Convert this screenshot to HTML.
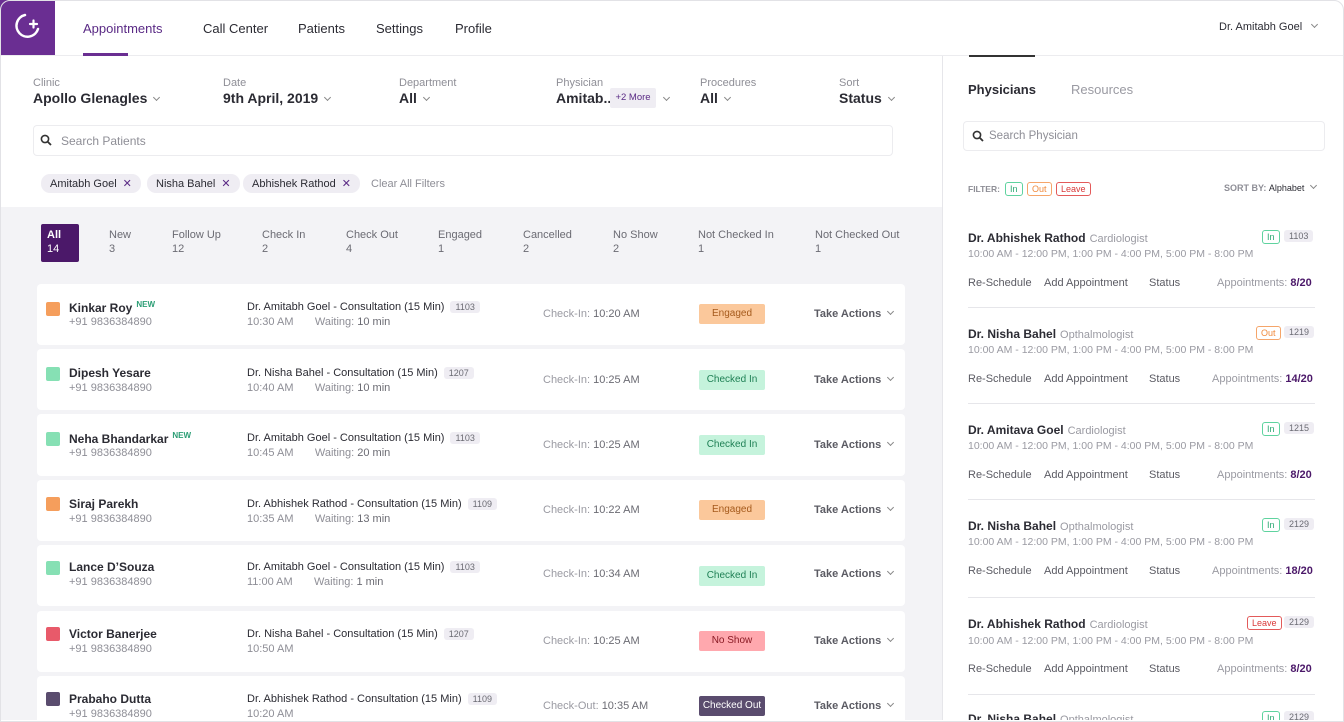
<!DOCTYPE html>
<html><head><meta charset="utf-8"><style>
*{box-sizing:border-box;margin:0;padding:0}
body{width:1344px;height:720px;overflow:hidden;background:#fff;font-family:"Liberation Sans",sans-serif;color:#2b2b33;position:relative}
.frame{position:absolute;left:0;top:0;width:1344px;height:720px;background:#fff;overflow:hidden}
.bord{position:absolute;left:0;top:0;width:1344px;height:722px;border:1px solid #e2e2e6;border-radius:10px 10px 0 0;z-index:9}
.a{position:absolute;white-space:nowrap}
.nav{font-size:13px;top:21px;color:#2b2b33}
.lbl{font-size:11px;color:#8e8e96}
.val{font-size:14px;font-weight:bold;color:#2b2b33}
.chev{display:inline-block;width:5px;height:5px;border-right:1px solid #888;border-bottom:1px solid #888;transform:rotate(45deg);margin-left:7px;position:relative;top:-3px}
.chip{position:absolute;top:174px;height:19px;background:#efedf3;border-radius:9px;font-size:11px;padding:3px 9px;color:#2b2b33}
.chip b{color:#5a2a85;font-weight:normal;margin-left:6px}
.tab{position:absolute;top:228px;font-size:11px;color:#6b6b73;line-height:14px}
.card{position:absolute;left:37px;width:868px;background:#fff;border-radius:4px}
.sq{position:absolute;left:9px;width:14px;height:14px;border-radius:2px}
.nm{position:absolute;left:32px;font-size:12px;font-weight:bold}
.nm i{font-style:normal;color:#2a9d74;font-size:8px;margin-left:4px;vertical-align:5px}
.ph{position:absolute;left:32px;font-size:11px;color:#8e8e96}
.dr{position:absolute;left:210px;font-size:11px;color:#2b2b33}
.dr s{text-decoration:none;background:#efedf3;color:#6b6b73;font-size:9px;padding:1px 5px;border-radius:3px;margin-left:6px}
.tm{position:absolute;left:210px;font-size:11px;color:#8e8e96}
.tm b{font-weight:normal;color:#6b6b73}
.ci{position:absolute;left:506px;font-size:11px;color:#9a9aa2}
.ci b{color:#6b6b73;font-weight:normal}
.bd{position:absolute;left:662px;width:66px;height:20px;font-size:10px;text-align:center;line-height:20px;border-radius:2px}
.ta{position:absolute;left:777px;font-size:11px;color:#5b5b63;font-weight:bold}
.pn{position:absolute;left:968px;font-size:12px;font-weight:bold}
.pn i{font-style:normal;font-weight:normal;color:#9a9aa2;font-size:11px;margin-left:4px}
.ph2{position:absolute;left:968px;font-size:10.5px;color:#9a9aa2}
.act{position:absolute;font-size:11px;color:#5b5b63}
.tag{position:absolute;font-size:9px;border:1px solid;border-radius:3px;padding:0 4px;line-height:12px}
.num{position:absolute;left:1284px;font-size:9px;background:#efedf3;color:#6b6b73;padding:1px 5px;border-radius:3px}
.sep{position:absolute;left:968px;width:347px;height:1px;background:#e6e6ea}
</style></head><body><div class="bord"></div><div class="frame">
<div class="a" style="left:0;top:0;width:55px;height:55px;background:#6a2e92"></div>
<svg class="a" style="left:12px;top:10px" width="32" height="32" viewBox="0 0 32 32"><path d="M13 5 A11 11 0 1 0 26 19" fill="none" stroke="#fff" stroke-width="2.5" stroke-linecap="round"/><path d="M18 14h7M21.5 10.5v7" stroke="#fff" stroke-width="2.2" stroke-linecap="round"/></svg>
<div class="a" style="left:0;top:55px;width:1344px;height:1px;background:#ececef"></div>
<div class="a nav" style="left:83px;color:#5a2a85">Appointments</div>
<div class="a" style="left:83px;top:53px;width:45px;height:3px;background:#6a2e92"></div>
<div class="a nav" style="left:203px">Call Center</div>
<div class="a nav" style="left:298px">Patients</div>
<div class="a nav" style="left:376px">Settings</div>
<div class="a nav" style="left:455px">Profile</div>
<div class="a" style="left:1219px;top:21px;font-size:11px">Dr. Amitabh Goel <span class="chev"></span></div>

<div class="a lbl" style="left:33px;top:77px">Clinic</div><div class="a val" style="left:33px;top:90px">Apollo Glenagles<span class="chev"></span></div>
<div class="a lbl" style="left:223px;top:77px">Date</div><div class="a val" style="left:223px;top:90px">9th April, 2019<span class="chev"></span></div>
<div class="a lbl" style="left:399px;top:77px">Department</div><div class="a val" style="left:399px;top:90px">All<span class="chev"></span></div>
<div class="a lbl" style="left:556px;top:77px">Physician</div><div class="a val" style="left:556px;top:90px">Amitab..</div>
<div class="a" style="left:610px;top:88px;width:46px;height:20px;background:#efedf3;border-radius:2px;font-size:9.5px;color:#5a2a85;line-height:20px;text-align:center">+2 More</div><div class="a" style="left:657px;top:90px"><span class="chev"></span></div>
<div class="a lbl" style="left:700px;top:77px">Procedures</div><div class="a val" style="left:700px;top:90px">All<span class="chev"></span></div>
<div class="a lbl" style="left:839px;top:77px">Sort</div><div class="a val" style="left:839px;top:90px">Status<span class="chev"></span></div>

<div class="a" style="left:33px;top:125px;width:860px;height:31px;border:1px solid #ececef;border-radius:4px"></div>
<svg class="a" style="left:40px;top:134px" width="12" height="12" viewBox="0 0 12 12"><circle cx="5" cy="5" r="3.6" fill="none" stroke="#333" stroke-width="1.6"/><path d="M7.6 7.6L11 11" stroke="#333" stroke-width="1.8"/></svg>
<div class="a" style="left:61px;top:134px;font-size:12px;color:#8e8e96">Search Patients</div>
<div class="chip" style="left:41px">Amitabh Goel<b>✕</b></div>
<div class="chip" style="left:147px">Nisha Bahel<b>✕</b></div>
<div class="chip" style="left:243px">Abhishek Rathod<b>✕</b></div>
<div class="a" style="left:371px;top:178px;font-size:11px;color:#8e8e96">Clear All Filters</div>

<div class="a" style="left:0;top:207px;width:942px;height:513px;background:#f3f3f6"></div>
<div class="a" style="left:942px;top:56px;width:1px;height:664px;background:#e6e6ea"></div>
<div class="a" style="left:41px;top:224px;width:38px;height:38px;background:#4b1869;border-radius:2px"></div>
<div class="tab" style="left:47px;top:228px;color:#fff"><b>All</b><br>14</div>
<div class="tab" style="left:109px">New<br>3</div>
<div class="tab" style="left:172px">Follow Up<br>12</div>
<div class="tab" style="left:262px">Check In<br>2</div>
<div class="tab" style="left:346px">Check Out<br>4</div>
<div class="tab" style="left:438px">Engaged<br>1</div>
<div class="tab" style="left:523px">Cancelled<br>2</div>
<div class="tab" style="left:613px">No Show<br>2</div>
<div class="tab" style="left:698px">Not Checked In<br>1</div>
<div class="tab" style="left:815px">Not Checked Out<br>1</div>

<div class="card" style="top:284px;height:61px"><div class="sq" style="top:18px;background:#f59e5c"></div><div class="nm" style="top:16px">Kinkar Roy<i>NEW</i></div><div class="ph" style="top:32px">+91 9836384890</div><div class="dr" style="top:17px">Dr. Amitabh Goel - Consultation (15 Min)<s>1103</s></div><div class="tm" style="top:32px">10:30 AM&nbsp;&nbsp;&nbsp;&nbsp;&nbsp;&nbsp;&nbsp;Waiting: <b>10 min</b></div><div class="ci" style="top:24px">Check-In: <b>10:20 AM</b></div><div class="bd" style="top:20px;background:#fbc89b;color:#a55a1c">Engaged</div><div class="ta" style="top:24px">Take Actions<span class="chev"></span></div></div>
<div class="card" style="top:349px;height:61px"><div class="sq" style="top:18px;background:#86e0b4"></div><div class="nm" style="top:17px">Dipesh Yesare</div><div class="ph" style="top:33px">+91 9836384890</div><div class="dr" style="top:18px">Dr. Nisha Bahel - Consultation (15 Min)<s>1207</s></div><div class="tm" style="top:33px">10:40 AM&nbsp;&nbsp;&nbsp;&nbsp;&nbsp;&nbsp;&nbsp;Waiting: <b>10 min</b></div><div class="ci" style="top:25px">Check-In: <b>10:25 AM</b></div><div class="bd" style="top:21px;background:#c5f3dc;color:#1f8055">Checked In</div><div class="ta" style="top:25px">Take Actions<span class="chev"></span></div></div>
<div class="card" style="top:414px;height:62px"><div class="sq" style="top:18px;background:#86e0b4"></div><div class="nm" style="top:17px">Neha Bhandarkar<i>NEW</i></div><div class="ph" style="top:33px">+91 9836384890</div><div class="dr" style="top:18px">Dr. Amitabh Goel - Consultation (15 Min)<s>1103</s></div><div class="tm" style="top:33px">10:45 AM&nbsp;&nbsp;&nbsp;&nbsp;&nbsp;&nbsp;&nbsp;Waiting: <b>20 min</b></div><div class="ci" style="top:25px">Check-In: <b>10:25 AM</b></div><div class="bd" style="top:21px;background:#c5f3dc;color:#1f8055">Checked In</div><div class="ta" style="top:25px">Take Actions<span class="chev"></span></div></div>
<div class="card" style="top:480px;height:61px"><div class="sq" style="top:17px;background:#f59e5c"></div><div class="nm" style="top:17px">Siraj Parekh</div><div class="ph" style="top:33px">+91 9836384890</div><div class="dr" style="top:18px">Dr. Abhishek Rathod - Consultation (15 Min)<s>1109</s></div><div class="tm" style="top:33px">10:35 AM&nbsp;&nbsp;&nbsp;&nbsp;&nbsp;&nbsp;&nbsp;Waiting: <b>13 min</b></div><div class="ci" style="top:24px">Check-In: <b>10:22 AM</b></div><div class="bd" style="top:20px;background:#fbc89b;color:#a55a1c">Engaged</div><div class="ta" style="top:24px">Take Actions<span class="chev"></span></div></div>
<div class="card" style="top:545px;height:61px"><div class="sq" style="top:16px;background:#86e0b4"></div><div class="nm" style="top:15px">Lance D’Souza</div><div class="ph" style="top:31px">+91 9836384890</div><div class="dr" style="top:16px">Dr. Amitabh Goel - Consultation (15 Min)<s>1103</s></div><div class="tm" style="top:31px">11:00 AM&nbsp;&nbsp;&nbsp;&nbsp;&nbsp;&nbsp;&nbsp;Waiting: <b>1 min</b></div><div class="ci" style="top:23px">Check-In: <b>10:34 AM</b></div><div class="bd" style="top:21px;background:#c5f3dc;color:#1f8055">Checked In</div><div class="ta" style="top:23px">Take Actions<span class="chev"></span></div></div>
<div class="card" style="top:611px;height:61px"><div class="sq" style="top:16px;background:#e85a6a"></div><div class="nm" style="top:16px">Victor Banerjee</div><div class="ph" style="top:32px">+91 9836384890</div><div class="dr" style="top:17px">Dr. Nisha Bahel - Consultation (15 Min)<s>1207</s></div><div class="tm" style="top:32px">10:50 AM</div><div class="ci" style="top:24px">Check-In: <b>10:25 AM</b></div><div class="bd" style="top:20px;background:#ffa8ae;color:#8a1a24">No Show</div><div class="ta" style="top:24px">Take Actions<span class="chev"></span></div></div>
<div class="card" style="top:676px;height:50px"><div class="sq" style="top:16px;background:#5a4c6e"></div><div class="nm" style="top:16px">Prabaho Dutta</div><div class="ph" style="top:32px">+91 9836384890</div><div class="dr" style="top:17px">Dr. Abhishek Rathod - Consultation (15 Min)<s>1109</s></div><div class="tm" style="top:32px">10:20 AM</div><div class="ci" style="top:24px">Check-Out: <b>10:35 AM</b></div><div class="bd" style="top:20px;background:#5a4c6e;color:#fff">Checked Out</div><div class="ta" style="top:24px">Take Actions<span class="chev"></span></div></div>

<div class="a" style="left:969px;top:55px;width:66px;height:2px;background:#333"></div>
<div class="a" style="left:968px;top:82px;font-size:13px;font-weight:bold">Physicians</div>
<div class="a" style="left:1071px;top:82px;font-size:13px;color:#9a9aa2">Resources</div>
<div class="a" style="left:963px;top:121px;width:362px;height:30px;border:1px solid #ececef;border-radius:4px"></div>
<svg class="a" style="left:972px;top:130px" width="12" height="12" viewBox="0 0 12 12"><circle cx="5" cy="5" r="3.6" fill="none" stroke="#333" stroke-width="1.6"/><path d="M7.6 7.6L11 11" stroke="#333" stroke-width="1.8"/></svg>
<div class="a" style="left:989px;top:130px;font-size:11.5px;color:#8e8e96">Search Physician</div>
<div class="a" style="left:968px;top:184px;font-size:8.5px;color:#8e8e96;font-weight:bold">FILTER:</div>
<div class="tag" style="left:1005px;top:182px;color:#2aa872;border-color:#5fd39f">In</div>
<div class="tag" style="left:1027px;top:182px;color:#f08a3c;border-color:#f5a56a">Out</div>
<div class="tag" style="left:1056px;top:182px;color:#d93a3a;border-color:#e35a5a">Leave</div>
<div class="a" style="left:1224px;top:183px;font-size:9px;color:#8e8e96;font-weight:bold">SORT BY: <span style="color:#2b2b33;font-weight:normal">Alphabet</span><span class="chev"></span></div>

<div class="pn" style="top:231px">Dr. Abhishek Rathod<i>Cardiologist</i></div><div class="ph2" style="top:248px">10:00 AM - 12:00 PM, 1:00 PM - 4:00 PM, 5:00 PM - 8:00 PM</div>
<div class="tag" style="left:1262px;top:230px;color:#2aa872;border-color:#5fd39f">In</div><div class="num" style="top:230px">1103</div>
<div class="act" style="left:968px;top:277px">Re-Schedule</div><div class="act" style="left:1044px;top:277px">Add Appointment</div><div class="act" style="left:1149px;top:277px">Status</div><div class="act" style="left:1217px;top:277px;color:#9a9aa2">Appointments: <b style="color:#4b1869">8/20</b></div>
<div class="sep" style="top:307px"></div>

<div class="pn" style="top:327px">Dr. Nisha Bahel<i>Opthalmologist</i></div><div class="ph2" style="top:344px">10:00 AM - 12:00 PM, 1:00 PM - 4:00 PM, 5:00 PM - 8:00 PM</div>
<div class="tag" style="left:1256px;top:326px;color:#f08a3c;border-color:#f5a56a">Out</div><div class="num" style="top:326px">1219</div>
<div class="act" style="left:968px;top:373px">Re-Schedule</div><div class="act" style="left:1044px;top:373px">Add Appointment</div><div class="act" style="left:1149px;top:373px">Status</div><div class="act" style="left:1212px;top:373px;color:#9a9aa2">Appointments: <b style="color:#4b1869">14/20</b></div>
<div class="sep" style="top:403px"></div>

<div class="pn" style="top:423px">Dr. Amitava Goel<i>Cardiologist</i></div><div class="ph2" style="top:440px">10:00 AM - 12:00 PM, 1:00 PM - 4:00 PM, 5:00 PM - 8:00 PM</div>
<div class="tag" style="left:1262px;top:422px;color:#2aa872;border-color:#5fd39f">In</div><div class="num" style="top:422px">1215</div>
<div class="act" style="left:968px;top:469px">Re-Schedule</div><div class="act" style="left:1044px;top:469px">Add Appointment</div><div class="act" style="left:1149px;top:469px">Status</div><div class="act" style="left:1217px;top:469px;color:#9a9aa2">Appointments: <b style="color:#4b1869">8/20</b></div>
<div class="sep" style="top:499px"></div>

<div class="pn" style="top:519px">Dr. Nisha Bahel<i>Opthalmologist</i></div><div class="ph2" style="top:536px">10:00 AM - 12:00 PM, 1:00 PM - 4:00 PM, 5:00 PM - 8:00 PM</div>
<div class="tag" style="left:1262px;top:518px;color:#2aa872;border-color:#5fd39f">In</div><div class="num" style="top:518px">2129</div>
<div class="act" style="left:968px;top:565px">Re-Schedule</div><div class="act" style="left:1044px;top:565px">Add Appointment</div><div class="act" style="left:1149px;top:565px">Status</div><div class="act" style="left:1212px;top:565px;color:#9a9aa2">Appointments: <b style="color:#4b1869">18/20</b></div>
<div class="sep" style="top:597px"></div>

<div class="pn" style="top:617px">Dr. Abhishek Rathod<i>Cardiologist</i></div><div class="ph2" style="top:635px">10:00 AM - 12:00 PM, 1:00 PM - 4:00 PM, 5:00 PM - 8:00 PM</div>
<div class="tag" style="left:1247px;top:616px;color:#d93a3a;border-color:#e35a5a">Leave</div><div class="num" style="top:616px">2129</div>
<div class="act" style="left:968px;top:663px">Re-Schedule</div><div class="act" style="left:1044px;top:663px">Add Appointment</div><div class="act" style="left:1149px;top:663px">Status</div><div class="act" style="left:1217px;top:663px;color:#9a9aa2">Appointments: <b style="color:#4b1869">8/20</b></div>
<div class="sep" style="top:694px"></div>
<div class="pn" style="top:712px">Dr. Nisha Bahel<i>Opthalmologist</i></div>
<div class="tag" style="left:1262px;top:711px;color:#2aa872;border-color:#5fd39f">In</div><div class="num" style="top:711px">2129</div>
</div></body></html>
